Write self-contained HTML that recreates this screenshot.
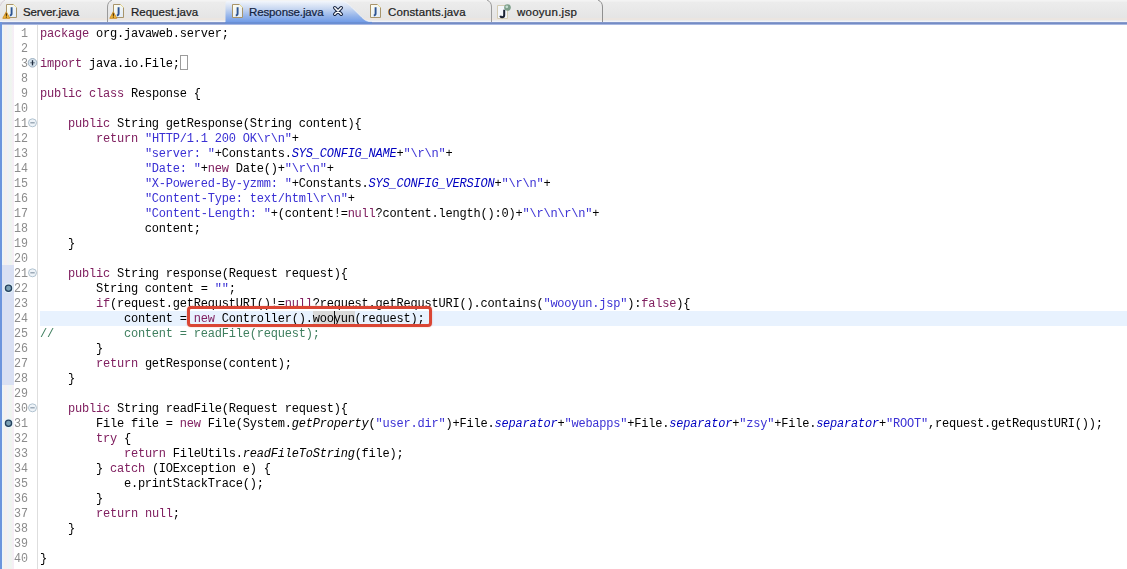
<!DOCTYPE html>
<html><head><meta charset="utf-8">
<style>
html,body{margin:0;padding:0;}
body{width:1127px;height:569px;overflow:hidden;background:#fff;position:relative;font-family:"Liberation Sans",sans-serif;}
svg{position:absolute;left:0;top:0;}
#wrap{position:absolute;left:0;top:0;width:1127px;height:569px;overflow:hidden;filter:blur(0.3px);}
#ruler{position:absolute;left:2px;top:25px;width:12px;height:544px;background:linear-gradient(90deg,#e8f6fd 0,#f8efea 25%,#eff1f8 50%,#eef6ee 72%,#f8ecf8 100%);}
#band{position:absolute;left:2px;top:265px;width:12px;height:120px;background:#d9e0f3;}
#leftbar{position:absolute;left:0;top:22px;width:2px;height:547px;background:#6c95dd;}
#gline{position:absolute;left:37px;top:25px;width:1px;height:544px;background:#dedede;}
.tt{position:absolute;top:5px;white-space:nowrap;font-size:11.5px;color:#1e1e1e;line-height:14px;-webkit-text-stroke:0.22px #1e1e1e;}
.ln{position:absolute;left:12px;width:16px;text-align:right;color:#8c8c8c;font-family:"Liberation Mono",monospace;font-size:11.667px;height:15px;line-height:15px;transform:translateY(1px) scaleY(1.08);transform-origin:50% 11px;}
.row{position:absolute;left:40px;height:15px;line-height:15px;white-space:pre;color:#000;font-family:"Liberation Mono",monospace;font-size:12px;letter-spacing:-0.21px;transform:translateY(1px) scaleY(1.07);transform-origin:50% 10px;}
.k{color:#802060;}
.s{color:#3a30d4;}
.f{color:#0000c0;font-style:italic;}
.i{font-style:italic;}
.c{color:#3f7f5f;}
#hl{position:absolute;left:40px;top:311px;width:1087px;height:15px;background:#e8f2fe;}
#redbox{position:absolute;left:187px;top:306px;width:239px;height:15px;border:3px solid #da4634;border-radius:4px;box-shadow:0 0 1.5px rgba(200,60,40,0.45);}
#occ{position:absolute;left:313px;top:311px;width:42px;height:13px;background:#dadada;}
#caret{position:absolute;left:334px;top:311px;width:1.4px;height:14px;background:#111;}
</style></head><body>
<div id="wrap">
<svg width="1127" height="26" viewBox="0 0 1127 26">
<defs>
<linearGradient id="tbg" x1="0" y1="0" x2="0" y2="1"><stop offset="0" stop-color="#ededed"/><stop offset="1" stop-color="#e3e3e3"/></linearGradient>
<linearGradient id="act" x1="0" y1="0" x2="0" y2="1"><stop offset="0" stop-color="#f4f7fc"/><stop offset="0.35" stop-color="#c9d8f1"/><stop offset="0.7" stop-color="#93b3ea"/><stop offset="1" stop-color="#6c98e6"/></linearGradient>
<linearGradient id="pg" x1="0" y1="0" x2="1" y2="1"><stop offset="0" stop-color="#fffef0"/><stop offset="1" stop-color="#dfeaf8"/></linearGradient>
<g id="jicon">
 <path d="M0.5,0.5 H7.5 L10.5,3.5 V13.5 H0.5 Z" fill="url(#pg)" stroke="#a8946a" stroke-width="1"/>
 <path d="M7.5,0.5 L10.5,3.5" stroke="#e8d890" stroke-width="1"/>
 <path d="M5.6,3.2 V9.6 Q5.6,11.3 3.8,11.5" fill="none" stroke="#2c5392" stroke-width="1.9"/>
</g>
<g id="warn">
 <path d="M3.3,0.3 L6.8,6.8 H-0.2 Z" fill="#f2b83a" stroke="#c98a22" stroke-width="0.9" stroke-linejoin="round"/>
 <rect x="2.8" y="1.8" width="1.1" height="2.6" fill="#3a2200"/><rect x="2.8" y="5" width="1.1" height="1.1" fill="#3a2200"/>
</g>
</defs>
<rect x="0" y="0" width="1127" height="22" fill="url(#tbg)"/>
<rect x="0" y="0" width="1127" height="1.5" fill="#f3f3f3"/>
<rect x="0" y="18" width="1127" height="2" fill="#ece5de" opacity="0.8"/>
<rect x="0" y="20.5" width="1127" height="1.5" fill="#f2f4f8"/>
<rect x="0" y="22" width="1127" height="1" fill="#8599cc"/>
<rect x="0" y="23" width="1127" height="1" fill="#748cc4"/>
<rect x="0" y="24" width="1127" height="1" fill="#a8b8e2"/>
<!-- active tab -->
<path d="M225.5,23 V3.5 Q225.5,0.8 228.5,0.8 H340 C345,0.8 348,3.5 352,7.5 L362,17.5 C365,20.5 367.5,21.8 372,21.8 V23 Z" fill="url(#act)"/>
<path d="M340,0.8 C345,0.8 348,3.5 352,7.5 L362,17.5 C365,20.5 367.5,21.8 372,21.8" fill="none" stroke="#f6f8fb" stroke-width="0.8" opacity="0.8"/>
<rect x="225" y="22" width="147" height="2" fill="#6a8fd4"/>
<!-- separators -->
<path d="M107.5,22 V7 Q107.5,2 112,0" fill="none" stroke="#9a9a9a" stroke-width="1"/>
<path d="M491.5,22 V7 Q491.5,2 487,0" fill="none" stroke="#9a9a9a" stroke-width="1"/>
<path d="M602.5,22 V7 Q602.5,2 598,0" fill="none" stroke="#8f8f8f" stroke-width="1"/>

<path d="M0,6 Q1.5,1.5 5,0" fill="none" stroke="#d8cfd8" stroke-width="1"/>
<!-- icons -->
<use href="#jicon" x="6" y="4"/>
<use href="#warn" x="3" y="11.5"/>
<use href="#jicon" x="113" y="4"/>
<use href="#warn" x="110" y="11.5"/>
<use href="#jicon" x="232" y="4"/>
<use href="#jicon" x="370" y="4"/>
<g transform="translate(497,5)">
 <path d="M0.5,0.5 H10.5 V13.5 H0.5 Z" fill="#f4f6fa" stroke="#d4ccb4" stroke-width="1"/>
 <path d="M7.2,4.8 V10.2 Q7.2,12.2 5,12.2 Q3.6,12.2 3.3,10.8" fill="none" stroke="#1b2233" stroke-width="2"/>
 <circle cx="10.5" cy="2.5" r="3.3" fill="#7d9f8a"/><circle cx="9.8" cy="1.8" r="1.4" fill="#c6ddd0"/>
</g>
<!-- close X -->
<g transform="translate(338,11)">
 <path d="M-3.2,-3.2 L3.2,3.2 M3.2,-3.2 L-3.2,3.2" stroke="#15223e" stroke-width="3.6" stroke-linecap="round"/>
 <path d="M-3.2,-3.2 L3.2,3.2 M3.2,-3.2 L-3.2,3.2" stroke="#ffffff" stroke-width="1.6" stroke-linecap="round"/>
</g>
</svg>
<div class="tt" style="left:23px;letter-spacing:-0.15px;">Server.java</div>
<div class="tt" style="left:131px;letter-spacing:0px;">Request.java</div>
<div class="tt" style="left:249px;letter-spacing:-0.12px;color:#13233f;-webkit-text-stroke-color:#13233f;">Response.java</div>
<div class="tt" style="left:388px;letter-spacing:0.12px;">Constants.java</div>
<div class="tt" style="left:517px;letter-spacing:0.25px;">wooyun.jsp</div>

<div id="leftbar"></div>
<div id="ruler"></div>
<div id="band"></div>
<div id="gline"></div>
<div id="hl"></div>
<div id="occ"></div>

<svg style="top:0" width="40" height="569" viewBox="0 0 40 569">
 <g><circle cx="32.5" cy="62.8" r="4.3" fill="#d5e2ec" stroke="#8aa0b4" stroke-width="0.8"/><path d="M30.2,62.8 H34.8" stroke="#5a6a7a" stroke-width="1"/><path d="M32.5,60.2 V65.4" stroke="#1e2d40" stroke-width="1.3"/></g>
 <g><circle cx="32.5" cy="122.8" r="4" fill="#eef3f8" stroke="#a9bccb" stroke-width="0.9"/><path d="M30.3,122.8 H34.7" stroke="#8898a8" stroke-width="1.2"/></g>
 <g><circle cx="32.5" cy="272.8" r="4" fill="#eef3f8" stroke="#a9bccb" stroke-width="0.9"/><path d="M30.3,272.8 H34.7" stroke="#8898a8" stroke-width="1.2"/></g>
 <g><circle cx="32.5" cy="407.8" r="4" fill="#eef3f8" stroke="#a9bccb" stroke-width="0.9"/><path d="M30.3,407.8 H34.7" stroke="#8898a8" stroke-width="1.2"/></g>
 <circle cx="8.5" cy="288.3" r="5" fill="#e4f6fb" opacity="0.8"/><g><circle cx="8.5" cy="288.3" r="3.1" fill="#7aa0b4" stroke="#25405e" stroke-width="1.3"/></g>
 <circle cx="8.5" cy="423.3" r="5" fill="#e4f6fb" opacity="0.8"/><g><circle cx="8.5" cy="423.3" r="3.1" fill="#7aa0b4" stroke="#25405e" stroke-width="1.3"/></g>
</svg>

<div class="ln" style="top:26px">1</div>
<div class="ln" style="top:41px">2</div>
<div class="ln" style="top:56px">3</div>
<div class="ln" style="top:71px">8</div>
<div class="ln" style="top:86px">9</div>
<div class="ln" style="top:101px">10</div>
<div class="ln" style="top:116px">11</div>
<div class="ln" style="top:131px">12</div>
<div class="ln" style="top:146px">13</div>
<div class="ln" style="top:161px">14</div>
<div class="ln" style="top:176px">15</div>
<div class="ln" style="top:191px">16</div>
<div class="ln" style="top:206px">17</div>
<div class="ln" style="top:221px">18</div>
<div class="ln" style="top:236px">19</div>
<div class="ln" style="top:251px">20</div>
<div class="ln" style="top:266px">21</div>
<div class="ln" style="top:281px">22</div>
<div class="ln" style="top:296px">23</div>
<div class="ln" style="top:311px">24</div>
<div class="ln" style="top:326px">25</div>
<div class="ln" style="top:341px">26</div>
<div class="ln" style="top:356px">27</div>
<div class="ln" style="top:371px">28</div>
<div class="ln" style="top:386px">29</div>
<div class="ln" style="top:401px">30</div>
<div class="ln" style="top:416px">31</div>
<div class="ln" style="top:431px">32</div>
<div class="ln" style="top:446px">33</div>
<div class="ln" style="top:461px">34</div>
<div class="ln" style="top:476px">35</div>
<div class="ln" style="top:491px">36</div>
<div class="ln" style="top:506px">37</div>
<div class="ln" style="top:521px">38</div>
<div class="ln" style="top:536px">39</div>
<div class="ln" style="top:551px">40</div>
<div class="row" style="top:26px"><span class="k">package</span> org.javaweb.server;</div>
<div class="row" style="top:41px"></div>
<div class="row" style="top:56px"><span class="k">import</span> java.io.File;</div>
<div class="row" style="top:71px"></div>
<div class="row" style="top:86px"><span class="k">public</span> <span class="k">class</span> Response {</div>
<div class="row" style="top:101px"></div>
<div class="row" style="top:116px">    <span class="k">public</span> String getResponse(String content){</div>
<div class="row" style="top:131px">        <span class="k">return</span> <span class="s">&quot;HTTP/1.1 200 OK\r\n&quot;</span>+</div>
<div class="row" style="top:146px">               <span class="s">&quot;server: &quot;</span>+Constants.<span class="f">SYS_CONFIG_NAME</span>+<span class="s">&quot;\r\n&quot;</span>+</div>
<div class="row" style="top:161px">               <span class="s">&quot;Date: &quot;</span>+<span class="k">new</span> Date()+<span class="s">&quot;\r\n&quot;</span>+</div>
<div class="row" style="top:176px">               <span class="s">&quot;X-Powered-By-yzmm: &quot;</span>+Constants.<span class="f">SYS_CONFIG_VERSION</span>+<span class="s">&quot;\r\n&quot;</span>+</div>
<div class="row" style="top:191px">               <span class="s">&quot;Content-Type: text/html\r\n&quot;</span>+</div>
<div class="row" style="top:206px">               <span class="s">&quot;Content-Length: &quot;</span>+(content!=<span class="k">null</span>?content.length():0)+<span class="s">&quot;\r\n\r\n&quot;</span>+</div>
<div class="row" style="top:221px">               content;</div>
<div class="row" style="top:236px">    }</div>
<div class="row" style="top:251px"></div>
<div class="row" style="top:266px">    <span class="k">public</span> String response(Request request){</div>
<div class="row" style="top:281px">        String content = <span class="s">&quot;&quot;</span>;</div>
<div class="row" style="top:296px">        <span class="k">if</span>(request.getRequstURI()!=<span class="k">null</span>?request.getRequstURI().contains(<span class="s">&quot;wooyun.jsp&quot;</span>):<span class="k">false</span>){</div>
<div class="row" style="top:311px">            content = <span class="k">new</span> Controller().wooyun(request);</div>
<div class="row" style="top:326px"><span class="c">//          content = readFile(request);</span></div>
<div class="row" style="top:341px">        }</div>
<div class="row" style="top:356px">        <span class="k">return</span> getResponse(content);</div>
<div class="row" style="top:371px">    }</div>
<div class="row" style="top:386px"></div>
<div class="row" style="top:401px">    <span class="k">public</span> String readFile(Request request){</div>
<div class="row" style="top:416px">        File file = <span class="k">new</span> File(System.<span class="i">getProperty</span>(<span class="s">&quot;user.dir&quot;</span>)+File.<span class="f">separator</span>+<span class="s">&quot;webapps&quot;</span>+File.<span class="f">separator</span>+<span class="s">&quot;zsy&quot;</span>+File.<span class="f">separator</span>+<span class="s">&quot;ROOT&quot;</span>,request.getRequstURI());</div>
<div class="row" style="top:431px">        <span class="k">try</span> {</div>
<div class="row" style="top:446px">            <span class="k">return</span> FileUtils.<span class="i">readFileToString</span>(file);</div>
<div class="row" style="top:461px">        } <span class="k">catch</span> (IOException e) {</div>
<div class="row" style="top:476px">            e.printStackTrace();</div>
<div class="row" style="top:491px">        }</div>
<div class="row" style="top:506px">        <span class="k">return</span> <span class="k">null</span>;</div>
<div class="row" style="top:521px">    }</div>
<div class="row" style="top:536px"></div>
<div class="row" style="top:551px">}</div>

<div id="caret"></div>
<div style="position:absolute;left:180px;top:55px;width:6px;height:13px;border:1px solid #9c9c9c;"></div>
<div id="redbox"></div>
</div>
</body></html>
